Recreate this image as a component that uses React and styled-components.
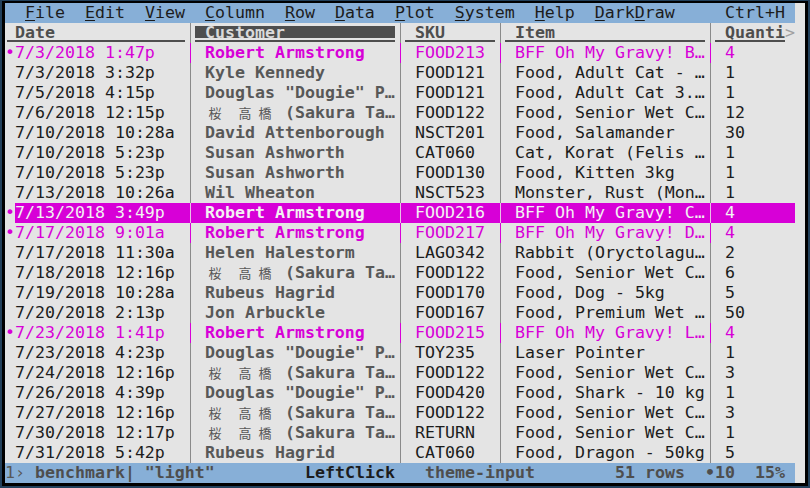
import React from "react";
import styled, { createGlobalStyle } from "styled-components";

const GRID = "10px 170px 10px 200px 10px 90px 10px 200px 10px 80px 10px";

const BLUE = "#87afd7";
const GREY_BG = "#e4e4e4";
const MAGENTA = "#d700d7";
const INK = "#1c1c1c";
const DIM = "#4e4e4e";

const GlobalStyle = createGlobalStyle`
  html, body {
    margin: 0;
    background: #22405b;
  }
  #root {
    padding: 1px 0 0 2px;
  }
`;

const Screen = styled.div`
  width: 800px;
  height: 480px;
  border-style: solid;
  border-color: #000;
  border-width: 2px 3px 3px 3px;
  background: ${GREY_BG};
  font-family: "DejaVu Sans Mono", "Liberation Mono", monospace;
  font-size: 16.6px;
  line-height: 20px;
  color: ${INK};
  display: flex;
  flex-direction: column;
  overflow: hidden;
`;

const MenuBar = styled.div`
  width: 790px;
  height: 20px;
  flex: none;
  display: flex;
  gap: 20px;
  padding: 0 10px 0 20px;
  box-sizing: border-box;
  background: ${BLUE};
  white-space: pre;
`;

const MenuItem = styled.span`
  color: ${INK};
  &:last-child {
    margin-left: auto;
  }
`;

const Hot = styled.span`
  text-decoration: underline;
  text-underline-offset: 2px;
`;

const TableRow = styled.div`
  display: grid;
  grid-template-columns: ${GRID};
  height: 20px;
  flex: none;
`;

const toneColor = (tone, current) => {
  if (tone === "cursor") return "#f2f2f2";
  if (tone === "selected") return MAGENTA;
  return current ? "#585858" : INK;
};

const Marker = styled.div`
  color: ${MAGENTA};
  white-space: pre;
  overflow: hidden;
`;

const Cell = styled.div`
  white-space: pre;
  overflow: hidden;
  padding-left: ${(p) => (p.$pad ? "10px" : "0")};
  font-weight: ${(p) => (p.$current ? 700 : 400)};
  color: ${(p) => toneColor(p.$tone, p.$current)};
  background: ${(p) => (p.$tone === "cursor" ? MAGENTA : "transparent")};
`;

const Sep = styled.div`
  display: flex;
  justify-content: center;
  background: ${(p) => (p.$tone === "cursor" ? MAGENTA : "transparent")};
  &::before {
    content: "";
    width: 1px;
    background: ${(p) =>
      p.$tone === "cursor" ? "#e8c0e8" : p.$tone === "selected" ? MAGENTA : "#8a8a8a"};
  }
`;

const underline = (color, from = "0px") =>
  `linear-gradient(${color}, ${color}) ${from} 17px / 100% 2px no-repeat`;

const HeadCell = styled.div`
  white-space: pre;
  overflow: hidden;
  font-weight: 700;
  padding-left: ${(p) => (p.$pad ? "10px" : "0")};
  color: ${(p) => (p.$current ? "#dadada" : DIM)};
  background: ${(p) =>
    p.$current
      ? `linear-gradient(${DIM}, ${DIM}) 0 3px / 100% 12px no-repeat, ${underline(DIM)}`
      : underline(DIM, p.$from || "0px")};
`;

const HeadMark = styled.div`
  background: linear-gradient(${DIM}, ${DIM}) 2px 17px / 8px 2px no-repeat;
`;

const QtyHead = styled(HeadCell)`
  background: linear-gradient(${DIM}, ${DIM}) 0 17px / 70px 2px no-repeat;
  display: flex;
`;

const More = styled.span`
  margin-left: auto;
  font-weight: 400;
  color: #a0a0a0;
`;

const Wide = styled.span`
  display: inline-block;
  width: 20px;
  text-align: center;
  font-family: "Noto Sans CJK JP", sans-serif;
  font-size: 13px;
  font-weight: 400;
  line-height: 1;
`;

const StatusBar = styled.div`
  width: 790px;
  height: 20px;
  flex: none;
  margin-top: auto;
  display: grid;
  grid-template-columns: 300px 120px 190px 90px 50px 1fr;
  background: ${BLUE};
  white-space: pre;
  font-weight: 700;
  color: ${DIM};
`;

const Seg = styled.span`
  color: ${(p) => (p.$strong ? INK : DIM)};
`;

const Light = styled.span`
  font-weight: 400;
  color: #585858;
`;

function Text({ value }) {
  const parts = value.split(/([\u3000-\u9fff])/);
  return parts.map((part, i) =>
    /^[\u3000-\u9fff]$/.test(part) ? <Wide key={i}>{part}</Wide> : part
  );
}

const SAKURA = "桜 高橋 (Sakura Ta…";
const DOUGIE = 'Douglas "Dougie" P…';

const rows = [
  ["7/3/2018 1:47p", "Robert Armstrong", "FOOD213", "BFF Oh My Gravy! B…", "4", true],
  ["7/3/2018 3:32p", "Kyle Kennedy", "FOOD121", "Food, Adult Cat - …", "1"],
  ["7/5/2018 4:15p", DOUGIE, "FOOD121", "Food, Adult Cat 3.…", "1"],
  ["7/6/2018 12:15p", SAKURA, "FOOD122", "Food, Senior Wet C…", "12"],
  ["7/10/2018 10:28a", "David Attenborough", "NSCT201", "Food, Salamander", "30"],
  ["7/10/2018 5:23p", "Susan Ashworth", "CAT060", "Cat, Korat (Felis …", "1"],
  ["7/10/2018 5:23p", "Susan Ashworth", "FOOD130", "Food, Kitten 3kg", "1"],
  ["7/13/2018 10:26a", "Wil Wheaton", "NSCT523", "Monster, Rust (Mon…", "1"],
  ["7/13/2018 3:49p", "Robert Armstrong", "FOOD216", "BFF Oh My Gravy! C…", "4", true],
  ["7/17/2018 9:01a", "Robert Armstrong", "FOOD217", "BFF Oh My Gravy! D…", "4", true],
  ["7/17/2018 11:30a", "Helen Halestorm", "LAGO342", "Rabbit (Oryctolagu…", "2"],
  ["7/18/2018 12:16p", SAKURA, "FOOD122", "Food, Senior Wet C…", "6"],
  ["7/19/2018 10:28a", "Rubeus Hagrid", "FOOD170", "Food, Dog - 5kg", "5"],
  ["7/20/2018 2:13p", "Jon Arbuckle", "FOOD167", "Food, Premium Wet …", "50"],
  ["7/23/2018 1:41p", "Robert Armstrong", "FOOD215", "BFF Oh My Gravy! L…", "4", true],
  ["7/23/2018 4:23p", DOUGIE, "TOY235", "Laser Pointer", "1"],
  ["7/24/2018 12:16p", SAKURA, "FOOD122", "Food, Senior Wet C…", "3"],
  ["7/26/2018 4:39p", DOUGIE, "FOOD420", "Food, Shark - 10 kg", "1"],
  ["7/27/2018 12:16p", SAKURA, "FOOD122", "Food, Senior Wet C…", "3"],
  ["7/30/2018 12:17p", SAKURA, "RETURN", "Food, Senior Wet C…", "1"],
  ["7/31/2018 5:42p", "Rubeus Hagrid", "CAT060", "Food, Dragon - 50kg", "5"],
];

const CURSOR = 8;

const menu = [
  ["F", "ile"],
  ["E", "dit"],
  ["V", "iew"],
  ["C", "olumn"],
  ["R", "ow"],
  ["D", "ata"],
  ["P", "lot"],
  ["S", "ystem"],
  ["H", "elp"],
];

function DataRow({ row, tone }) {
  const [date, customer, sku, item, qty, selected] = row;
  return (
    <TableRow>
      <Marker>{selected ? "•" : " "}</Marker>
      <Cell $tone={tone}>{date}</Cell>
      <Sep $tone={tone} />
      <Cell $tone={tone} $current $pad>
        <Text value={customer} />
      </Cell>
      <Sep $tone={tone} />
      <Cell $tone={tone} $pad>{sku}</Cell>
      <Sep $tone={tone} />
      <Cell $tone={tone} $pad>{item}</Cell>
      <Sep $tone={tone} />
      <Cell $tone={tone} $pad>{qty}</Cell>
      <div />
    </TableRow>
  );
}

export default function App() {
  return (
    <>
      <GlobalStyle />
      <Screen>
        <MenuBar>
          {menu.map(([key, rest]) => (
            <MenuItem key={key + rest}>
              <Hot>{key}</Hot>
              {rest}
            </MenuItem>
          ))}
          <MenuItem>
            <Hot>D</Hot>ark<Hot>D</Hot>raw
          </MenuItem>
          <MenuItem>Ctrl+H</MenuItem>
        </MenuBar>

        <TableRow>
          <HeadMark />
          <HeadCell>Date</HeadCell>
          <Sep />
          <HeadCell $current $pad>Customer</HeadCell>
          <Sep />
          <HeadCell $pad>SKU</HeadCell>
          <Sep />
          <HeadCell $pad>Item</HeadCell>
          <Sep />
          <QtyHead $pad>
            Quanti<More>&gt;</More>
          </QtyHead>
          <div />
        </TableRow>

        {rows.map((row, i) => (
          <DataRow
            key={i}
            row={row}
            tone={i === CURSOR ? "cursor" : row[5] ? "selected" : "normal"}
          />
        ))}

        <StatusBar>
          <span>
            <Light>1›</Light> benchmark| "light"
          </span>
          <Seg $strong>LeftClick</Seg>
          <Seg>theme-input</Seg>
          <Seg>51 rows</Seg>
          <Seg>•10</Seg>
          <Seg>15%</Seg>
        </StatusBar>
      </Screen>
    </>
  );
}
